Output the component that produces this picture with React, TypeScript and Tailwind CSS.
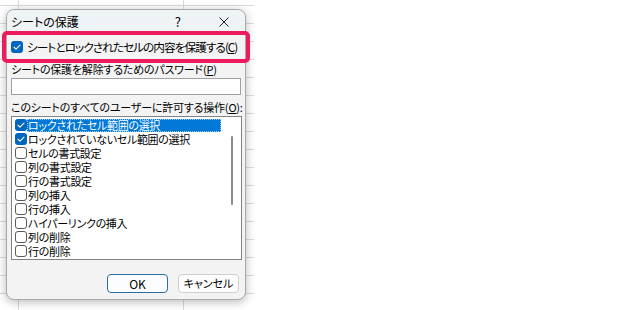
const font = "font-['Noto_Sans_CJK_JP','Noto_Sans',sans-serif] [font-feature-settings:'palt']";

const items = [
  { label: "ロックされたセル範囲の選択", checked: true, selected: true },
  { label: "ロックされていないセル範囲の選択", checked: true },
  { label: "セルの書式設定" },
  { label: "列の書式設定" },
  { label: "行の書式設定" },
  { label: "列の挿入" },
  { label: "行の挿入" },
  { label: "ハイパーリンクの挿入" },
  { label: "列の削除" },
  { label: "行の削除" },
];

function CheckBox({ checked }: { checked?: boolean }) {
  if (checked) {
    return (
      <span className="flex h-[12px] w-[12px] shrink-0 items-center justify-center rounded-[3px] bg-[#0067c0]">
        <svg viewBox="0 0 12 12" className="h-[10px] w-[10px]" fill="none" stroke="white" strokeWidth={1.3}>
          <path d="M2.5 6.3l2.3 2.3L9.6 3.8" strokeLinecap="round" strokeLinejoin="round" />
        </svg>
      </span>
    );
  }
  return <span className="h-[12px] w-[12px] shrink-0 rounded-[3px] border border-[#5a5a5a] bg-white" />;
}

export default function App() {
  return (
    <div className={`flex h-[310px] w-[640px] bg-white text-[11px] leading-none whitespace-nowrap text-black ${font}`}>
      {/* Excel sheet behind the dialog */}
      <div className="h-full w-[254px] bg-[linear-gradient(#dadada_1px,transparent_1px),linear-gradient(90deg,transparent_18px,#dadada_18px,#dadada_19px,transparent_19px,transparent_183px,#dadada_183px,#dadada_184px,transparent_184px)] bg-[size:100%_18px,100%_100%] bg-[position:0_5px,0_0] pl-[6px] pt-[9px]">
        <div className="flex h-[291px] w-[240px] flex-col rounded-[8px] border border-[#a9a9a9] bg-[#f3f3f3] shadow-[0_2px_10px_rgba(0,0,0,0.28)]">
          {/* Title bar */}
          <div className="flex h-[21px] items-center rounded-t-[8px] bg-[#eef3f6] pl-[4px] pt-[2px]">
            <span className="text-[12px]">シートの保護</span>
            <span className="ml-auto mr-[38px] text-[13px]">?</span>
            <svg viewBox="0 0 10 10" className="mr-[16px] h-[10px] w-[10px]" stroke="#222" strokeWidth={1}>
              <path d="M0.5 0.5l9 9M9.5 0.5l-9 9" />
            </svg>
          </div>

          {/* Highlighted option */}
          <div className="-mx-[5px] flex h-[32px] items-center gap-[4px] rounded-[5px] border-4 border-[#ec1c5c] px-[5px]">
            <CheckBox checked />
            <span className="text-[11.7px] tracking-[-1px]">
              シートとロックされたセルの内容を保護する(<span className="underline">C</span>)
            </span>
          </div>

          <div className="flex flex-col px-[4px]">
            <span className="leading-[12px] tracking-[-0.2px]">
              シートの保護を解除するためのパスワード(<span className="underline">P</span>)
            </span>
            <div className="mt-[3px] h-[17px] w-[230px] border border-[#a0a0a0] bg-white" />
            <span className="mt-[6px] leading-[12px] tracking-[-0.2px]">
              このシートのすべてのユーザーに許可する操作(<span className="underline">O</span>):
            </span>

            {/* List box */}
            <div className="mt-[3px] flex h-[144px] w-[231px] border border-[#828282] bg-white">
              <div className="flex flex-1 flex-col pl-[3px] pt-[1px] leading-[12px] tracking-[-0.3px]">
                {items.map((it) => (
                  <div key={it.label} className="flex h-[14px] items-center">
                    <CheckBox checked={it.checked} />
                    <span
                      className={
                        it.selected
                          ? "flex h-[13px] w-[194px] items-center border border-dotted border-[#9ec8f0] bg-[#0078d7] text-white"
                          : "pl-[1px]"
                      }
                    >
                      {it.label}
                    </span>
                  </div>
                ))}
              </div>
              <div className="w-[10px] pt-[19px]">
                <div className="h-[69px] w-[2px] rounded-full bg-[#8a8a8a]" />
              </div>
            </div>
          </div>

          {/* Buttons */}
          <div className="mt-auto flex justify-end gap-[10px] pb-[6px] pr-[6px]">
            <button className="h-[19px] w-[61px] rounded-[4px] border border-[#2a6f99] bg-[#fbfdfe] text-[12px]">OK</button>
            <button className="h-[19px] w-[61px] rounded-[4px] border border-[#cfcfcf] bg-[#fdfdfd] text-[11px]">キャンセル</button>
          </div>
        </div>
      </div>
    </div>
  );
}
